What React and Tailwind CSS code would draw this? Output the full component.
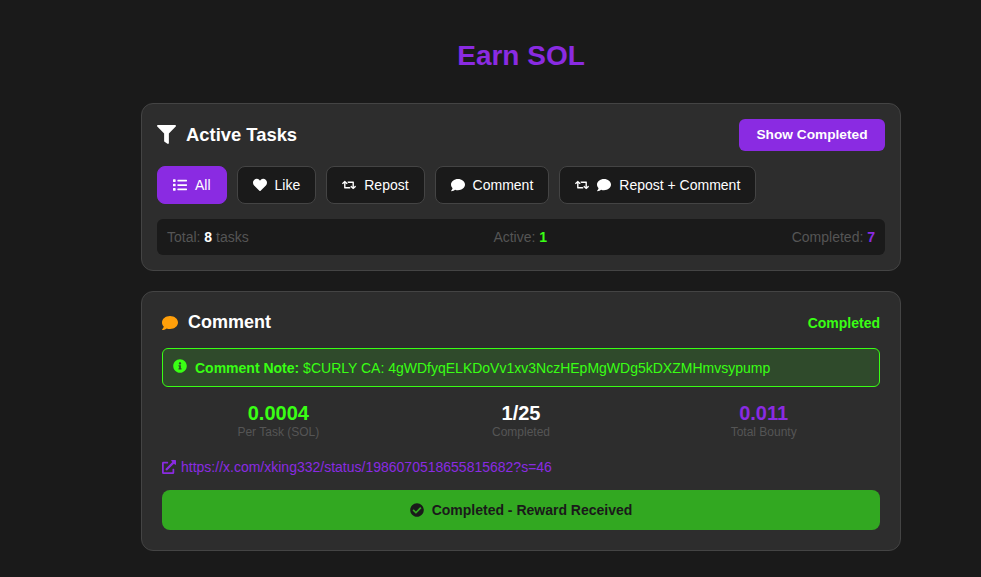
import { FaFilter, FaList, FaHeart, FaRetweet, FaComment, FaInfoCircle, FaExternalLinkAlt, FaCheckCircle } from 'react-icons/fa';

const filters = [
  { label: 'All', icons: [FaList], active: true },
  { label: 'Like', icons: [FaHeart] },
  { label: 'Repost', icons: [FaRetweet] },
  { label: 'Comment', icons: [FaComment] },
  { label: 'Repost + Comment', icons: [FaRetweet, FaComment] },
];

function FilterButton({ label, icons, active }) {
  return (
    <button
      className={`h-[38px] px-[15px] flex items-center gap-[8px] rounded-lg border text-sm ${
        active ? 'bg-[#8a2be2] border-[#8a2be2] text-white' : 'bg-[#1a1a1a] border-[#444] text-white'
      }`}
    >
      {icons.map((Icon, i) => (
        <Icon key={i} className="text-[14px]" />
      ))}
      <span>{label}</span>
    </button>
  );
}

function Stat({ value, label, color }) {
  return (
    <div className="text-center">
      <div className={`text-[20px] leading-[23px] font-bold ${color}`}>{value}</div>
      <div className="text-xs leading-[14px] text-[#555]">{label}</div>
    </div>
  );
}

export default function App() {
  return (
    <div className="min-h-screen bg-[#1a1a1a] pl-[61px] font-['Liberation_Sans',sans-serif] text-white">
      <div className="w-[760px] mx-auto pt-[40px]">
        <h1 className="text-center text-[28px] leading-[32px] font-bold text-[#8a2be2] mb-[31px]">Earn SOL</h1>

        <div className="bg-[#2d2d2d] border border-[#444] rounded-xl p-[15px] mb-[20px]">
          <div className="flex items-center justify-between mb-[15px]">
            <h2 className="flex items-center gap-[10px] text-[18.4px] leading-[21px] font-bold mb-[2px]">
              <FaFilter className="text-[19px]" />
              Active Tasks
            </h2>
            <button className="h-[32px] px-[17.5px] rounded-md bg-[#8a2be2] text-white text-[13.7px] font-bold">
              Show Completed
            </button>
          </div>
          <div className="flex gap-[10px] mb-[15px]">
            {filters.map((f) => (
              <FilterButton key={f.label} {...f} />
            ))}
          </div>
          <div className="h-[36px] px-[10px] flex items-center justify-between rounded-md bg-[#1a1a1a] text-sm text-[#555]">
            <span>Total: <b className="text-white">8</b> tasks</span>
            <span>Active: <b className="text-[#39ff14]">1</b></span>
            <span>Completed: <b className="text-[#8a2be2]">7</b></span>
          </div>
        </div>

        <div className="bg-[#2d2d2d] border border-[#444] rounded-xl p-[20px]">
          <div className="h-[20px] flex items-center justify-between mb-[16px]">
            <h3 className="flex items-center gap-[10px] text-[18px] leading-[20px] font-bold">
              <FaComment className="text-[16px] text-[#ff9f0a] mt-[2px]" />
              Comment
            </h3>
            <span className="text-sm font-bold text-[#39ff14] mt-[2px]">Completed</span>
          </div>
          <div className="h-[39px] px-[10px] flex items-center gap-[8px] rounded-md border border-[#39ff14] bg-[#2f4a2b] text-sm text-[#39ff14]">
            <FaInfoCircle className="text-[14px] mb-[3px]" />
            <span><b>Comment Note:</b> $CURLY CA: 4gWDfyqELKDoVv1xv3NczHEpMgWDg5kDXZMHmvsypump</span>
          </div>
          <div className="grid grid-cols-3 gap-[10px] mt-[15px] mb-[18px]">
            <Stat value="0.0004" label="Per Task (SOL)" color="text-[#39ff14]" />
            <Stat value="1/25" label="Completed" color="text-white" />
            <Stat value="0.011" label="Total Bounty" color="text-[#8a2be2]" />
          </div>
          <a className="flex items-center gap-[5px] text-sm text-[#8a2be2] mb-[13px]">
            <FaExternalLinkAlt className="text-[14px]" />
            https://x.com/xking332/status/1986070518655815682?s=46
          </a>
          <button className="w-full h-[40px] flex items-center justify-center gap-[8px] rounded-lg bg-[#32a821] text-[#1a1a1a] text-sm font-bold">
            <FaCheckCircle className="text-[14px]" />
            Completed - Reward Received
          </button>
        </div>
      </div>
    </div>
  );
}
